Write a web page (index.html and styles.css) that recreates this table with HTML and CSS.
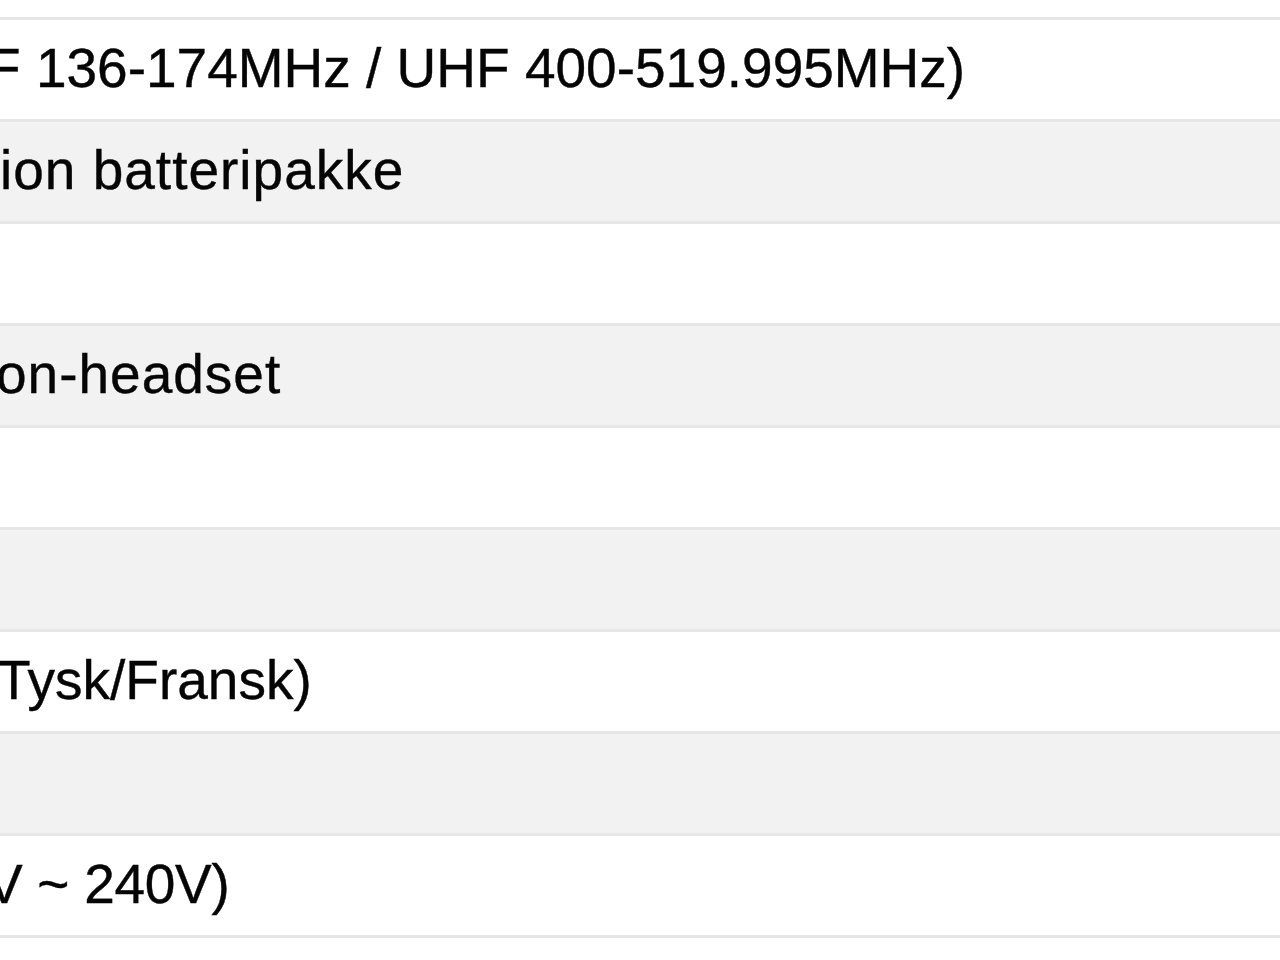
FILE: index.html
```html
<!DOCTYPE html>
<html lang="da">
<head>
<meta charset="utf-8">
<title>Specifikationer</title>
<link rel="stylesheet" href="styles.css">
</head>
<body>
<div class="spec">
  <div class="row odd"><span class="val v1">F 136-174MHz / UHF 400-519.995MHz)</span></div>
  <div class="row even"><span class="val v2">ion batteripakke</span></div>
  <div class="row odd"></div>
  <div class="row even"><span class="val v4">on-headset</span></div>
  <div class="row odd"></div>
  <div class="row even"></div>
  <div class="row odd"><span class="val v7">Tysk/Fransk)</span></div>
  <div class="row even"></div>
  <div class="row odd"><span class="val v9">V ~ 240V)</span></div>
  <div class="row last"></div>
</div>
</body>
</html>
```

FILE: styles.css
```css
html, body {
  margin: 0;
  padding: 0;
  background: #ffffff;
}
body {
  width: 1280px;
  height: 960px;
  overflow: hidden;
  font-family: "Liberation Sans", Arial, sans-serif;
  color: #050505;
}
.spec {
  padding-top: 17px;
  display: flex;
  flex-direction: column;
}
.row {
  height: 99px;
  border-top: 3px solid #e6e6e6;
  display: flex;
  align-items: center;
  overflow: hidden;
  white-space: nowrap;
}
.row.odd { background: #ffffff; }
.row.even { background: #f2f2f2; }
.row.last { background: #ffffff; height: 20px; }
.val {
  font-size: 55px;
  line-height: 1;
  padding-bottom: 2px;
  -webkit-text-stroke: 0.4px #050505;
}
.v1 { margin-left: -13px; }
.v2 { margin-left: 0; letter-spacing: 1px; }
.v4 { margin-left: -4px; letter-spacing: 1px; }
.v7 { margin-left: -3px; }
.v9 { margin-left: -14px; letter-spacing: -0.3px; }
```
